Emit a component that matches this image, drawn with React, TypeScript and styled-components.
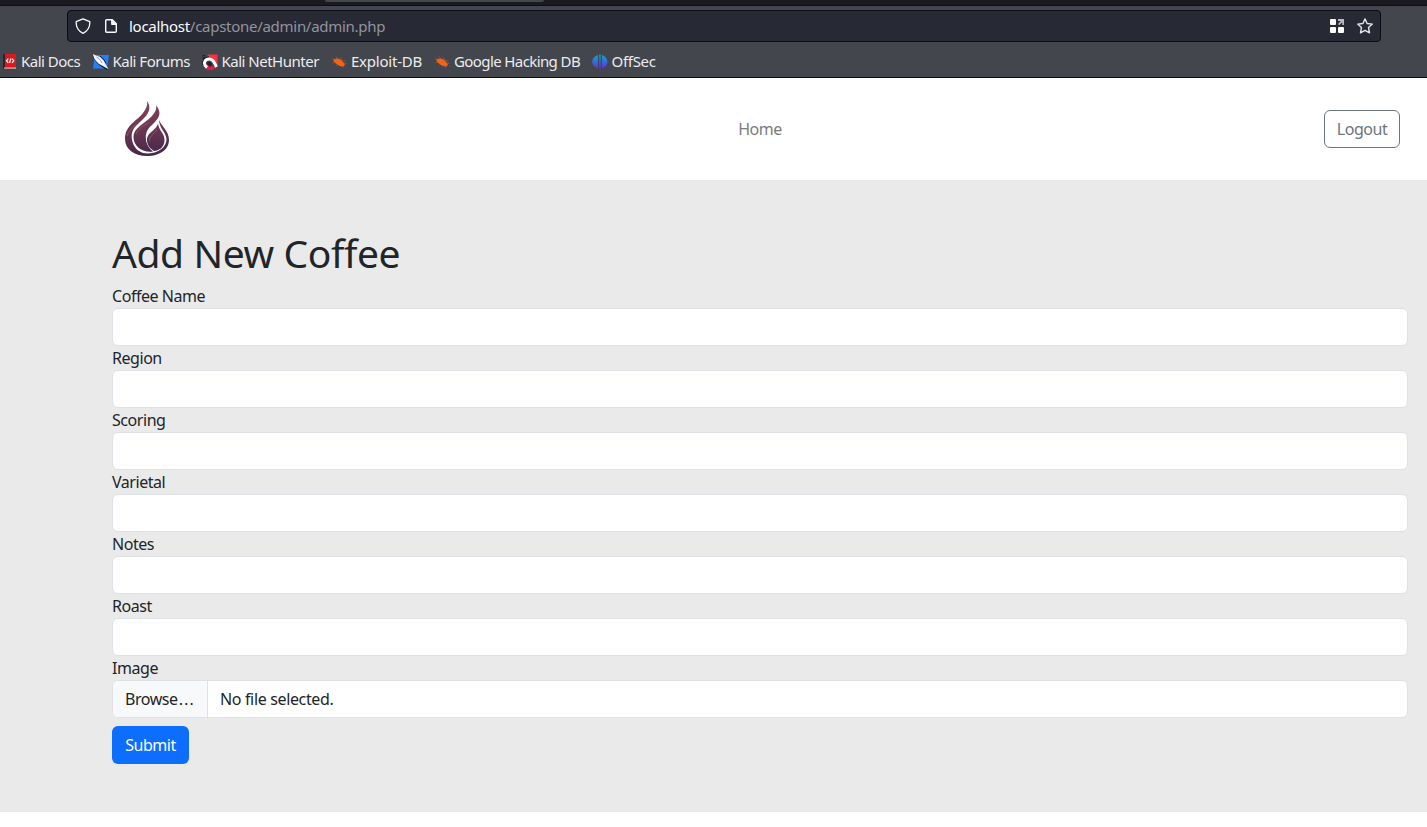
import React from "react";
import styled, { createGlobalStyle } from "styled-components";

const GlobalStyle = createGlobalStyle`
  *, *::before, *::after { box-sizing: border-box; }
  html, body { margin: 0; padding: 0; background: #fff; overflow: hidden; }
  body { font-family: "Noto Sans", sans-serif; font-size: 16px; line-height: 24px; color: #212529; }
  svg { display: block; flex: none; }
`;

const Page = styled.div`
  width: 1427px;
  height: 827px;
  overflow: hidden;
  letter-spacing: -0.45px;
`;

const TabStrip = styled.div`
  height: 6px;
  padding-left: 325px;
  background: #1b1a20;
  border-bottom: 1px solid #0d0d12;
`;

const ActiveTab = styled.div`
  width: 219px;
  height: 2px;
  background: #43464d;
  border-radius: 0 0 4px 4px;
`;

const Toolbar = styled.div`
  height: 72px;
  padding: 4px 46px 0 67px;
  background: #43464d;
  border-bottom: 1px solid #0d0d12;
`;

const AddressBar = styled.div`
  display: flex;
  align-items: center;
  height: 32px;
  padding: 0 7px;
  background: #272935;
  border: 1px solid #0b0c13;
  border-radius: 4px;
`;

const Url = styled.div`
  flex: 1;
  margin-left: 10px;
  font-size: 15px;
  line-height: 20px;
  color: #93949a;
  letter-spacing: -0.28px;
`;

const Host = styled.span`
  color: #fbfbfe;
`;

const PageIcon = styled.span`
  margin-left: 12px;
`;

const StarIcon = styled.span`
  margin-left: 12px;
`;

const Bookmarks = styled.nav`
  display: flex;
  align-items: center;
  height: 36px;
  margin: 2px 0 0 -65px;
`;

const Bookmark = styled.a<{ $width: number; $gap: number; $spacing: number }>`
  display: flex;
  align-items: center;
  gap: ${(p) => p.$gap}px;
  width: ${(p) => p.$width}px;
  font-size: 15px;
  line-height: 20px;
  color: #ececef;
  white-space: nowrap;
  letter-spacing: ${(p) => p.$spacing}px;
`;

const BookmarkLabel = styled.span`
  padding-bottom: 2px;
`;

const Header = styled.header`
  display: grid;
  grid-template-columns: 1fr auto 1fr;
  align-items: center;
  height: 102px;
  padding: 0 27px 0 120px;
  background: #fff;
`;

const HomeLink = styled.a`
  color: #797b7e;
`;

const LogoutButton = styled.button`
  justify-self: end;
  width: 76px;
  height: 38px;
  padding: 0;
  font: inherit;
  letter-spacing: inherit;
  color: #6c757d;
  background: #fff;
  border: 1px solid #6c757d;
  border-radius: 6px;
`;

const FormSection = styled.main`
  height: 632px;
  padding: 48px 19px 48px 112px;
  background: #eaeaea;
`;

const Title = styled.h1`
  height: 48px;
  margin: 0 0 8px;
  font-size: 39px;
  font-weight: 400;
  line-height: 50px;
  letter-spacing: -0.4px;
`;

const Label = styled.label`
  display: block;
  height: 24px;
`;

const Input = styled.input`
  display: block;
  width: 100%;
  height: 38px;
  padding: 6px 12px;
  font: inherit;
  background: #fff;
  border: 1px solid #dee2e6;
  border-radius: 6px;
  outline: none;
`;

const FileInput = styled.div`
  display: flex;
  height: 38px;
  overflow: hidden;
  line-height: 36px;
  background: #fff;
  border: 1px solid #dee2e6;
  border-radius: 6px;
`;

const Browse = styled.span`
  width: 95px;
  padding-left: 12px;
  background: #f8f9fa;
  border-right: 1px solid #dee2e6;
  white-space: nowrap;
`;

const Ellipsis = styled.span`
  font-family: "DejaVu Sans", sans-serif;
  font-size: 16px;
  line-height: 20px;
  margin-left: 0.5px;
`;

const FileName = styled.span`
  padding-left: 12px;
  letter-spacing: -0.35px;
`;

const SubmitButton = styled.button`
  display: block;
  width: 77px;
  height: 38px;
  margin-top: 8px;
  padding: 0;
  font: inherit;
  letter-spacing: inherit;
  color: #fff;
  background: #0d6efd;
  border: 0;
  border-radius: 6px;
`;

const ShieldGlyph = () => (
  <svg width="16" height="16" viewBox="0 0 16 16" fill="none" stroke="#fbfbfe" strokeWidth="1.3" strokeLinejoin="round">
    <path d="M8 .8 14.800 3.600c.3 5.300-1.900 9.400-6.800 11.700C3.100 13 .9 8.900 1.200 3.600Z" />
  </svg>
);

const DocumentGlyph = () => (
  <svg width="16" height="16" viewBox="0 0 16 16" fill="none" stroke="#fbfbfe" strokeWidth="1.4" strokeLinejoin="round">
    <path d="M3.700 1.700H9.300L13.300 5.700V13.300Q13.300 14.300 12.300 14.300H3.700Q2.700 14.300 2.700 13.300V2.700Q2.700 1.700 3.700 1.700Z" />
    <path d="M8.800 2V6.200H13" />
    <path d="M9 2 13 6H9Z" fill="#fbfbfe" stroke="none" />
  </svg>
);

const AppsGlyph = () => (
  <svg width="16" height="16" viewBox="0 0 16 16" fill="#fbfbfe">
    <rect x="1" y="1" width="6" height="6" rx="1" />
    <rect x="1" y="9" width="6" height="6" rx="1" />
    <rect x="9" y="9" width="6" height="6" rx="1" />
    <path d="M9 1H15V7H13.300V4.300L10.200 7.300 9 6.100 11.900 3H9Z" fill="#b9babf" />
  </svg>
);

const StarGlyph = () => (
  <svg width="16" height="16" viewBox="0 0 16 16" fill="none" stroke="#e4e4e8" strokeWidth="1.4" strokeLinejoin="round">
    <path d="M8 .9 10.100 5.500 15.300 6.100 11.500 9.500 12.500 14.900 8 12.300 3.500 14.900 4.500 9.500.7 6.100 5.900 5.500Z" />
  </svg>
);

const DocsGlyph = () => (
  <svg width="16" height="16" viewBox="0 0 16 16">
    <path d="M1 0h3v15H1z" fill="#24253b" />
    <path d="M3 0H14V13.500H3z" fill="#dd171b" />
    <path d="M2 13.500H14V14.800H2z" fill="#d8c6c9" />
    <path d="M2 14.800H13V16H2z" fill="#ad1117" />
    <path d="M6.300 4.700 4.500 6.800 6.300 8.800M10 4.700 11.800 6.700 10 8.800M8.800 4.500 7.500 9" fill="none" stroke="#fff" strokeWidth="1.200" />
  </svg>
);

const ForumsGlyph = () => (
  <svg width="16" height="16" viewBox="0 0 16 16">
    <path d="M2 1H16L14 14.500H0Z" fill="#247fff" />
    <path d="M0 2 4 8 7 11 14 15.500" fill="none" stroke="#171b27" strokeWidth="1.200" />
    <path d="M0 0 3 1.500 7 3 11 7 13 11 15.500 15 10 12 6 10 3 7 1 4Z" fill="#f4f5fa" />
    <path d="M3.500 3 7 5.500 9 9" fill="none" stroke="#8e96a9" strokeWidth=".8" />
    <path d="M7 2 11 5.500 13 9.500" fill="none" stroke="#171b27" strokeWidth=".9" />
  </svg>
);

const HunterGlyph = () => (
  <svg width="16" height="16" viewBox="0 0 16 16">
    <path d="M5 .5H15.500V12Z" fill="#ff3038" />
    <path d="M.5 2 3 1.500M.5 4.500 3 3.500M1 11C.5 6 3 3 7 3" fill="none" stroke="#171821" strokeWidth="1.200" />
    <path d="m2 12 3-2 4 2 5 1L11 16H5Z" fill="#e81946" />
    <path d="M5 13.500C.5 10 2.500 4.800 7.500 5C11.500 5.200 12.500 9 14.500 13" fill="none" stroke="#fff" strokeWidth="3" />
    <path d="M5 10C6 7 9 7 10 11L8 13Z" fill="#22212c" />
  </svg>
);

const BugGlyph = () => (
  <svg width="16" height="16" viewBox="0 0 16 16" fill="#f26415" stroke="#d95e1c">
    <path d="M1.500 5.500C5 3.500 8.500 4.500 11 8L13 10.500 11.500 12.500C7.500 12.500 4 10.500 1.500 7Z" stroke="none" />
    <path d="M0 4.500 4 6M4 2.500 6 5M8.500 3 9.500 6M13.500 7 10 6.500M14.500 9.500 11 9M.5 9 4 8M4 12 6 10M11 14 9 11" strokeWidth=".5" />
  </svg>
);

const OffSecGlyph = () => (
  <svg width="16" height="16" viewBox="0 0 16 16">
    <defs>
      <linearGradient id="offsec" x1="0" y1="0" x2="0" y2="1">
        <stop offset="0" stopColor="#11a6c5" />
        <stop offset=".5" stopColor="#336bdd" />
        <stop offset="1" stopColor="#7420cf" />
      </linearGradient>
    </defs>
    <path d="M6 1V14.500C-1.700 12-1.700 3.500 6 1ZM7.300 .5H8.700V15.500H7.300ZM10 1C17.300 3.500 17.300 12 10 14.500Z" fill="url(#offsec)" />
  </svg>
);

const FlameLogo = () => (
  <svg width="54" height="60" viewBox="0 0 54 60">
    <defs>
      <linearGradient id="flame" gradientUnits="userSpaceOnUse" x1="24" y1="2" x2="32" y2="57">
        <stop offset="0" stopColor="#854457" />
        <stop offset=".55" stopColor="#693452" />
        <stop offset="1" stopColor="#422749" />
      </linearGradient>
    </defs>
    <g fill="url(#flame)">
      <path d="M27 2C34 12 24 19 18 25C12 30 11 35 12 41C14 50 20 54.500 28 54.500C39 54 46.500 48 46.500 40C46 33 39 29 39 21C42 28 49 32 49 41C49 51 39 57 27 57C14 57 5 50 5 40C5 26 17 22 23 14C26 10 28 6 27 2Z" />
      <path d="M36 6C43 15 38 20 32 26C27 30 25 35 26 41C27 47 30 50 33 52.500C22 54 13.500 47 13.500 38C13.500 29 24 25 31 18C35 14 37 10 36 6Z" />
      <path d="M38 24.500C39 32 44.500 34 44.500 41C44.500 48 39 52 34 52C29 49 26.700 45 27 40C27.500 33 36 32 38 24.500Z" />
    </g>
    <path d="M7 37C9 31 13 28 17 25M29 42C30 37 34 34 37 31M16 35C18 30 23 27 28 24" fill="none" stroke="#a5677c" strokeWidth=".9" opacity=".65" />
  </svg>
);

const bookmarks = [
  { label: "Kali Docs", icon: <DocsGlyph />, width: 91, gap: 3, spacing: -0.5 },
  { label: "Kali Forums", icon: <ForumsGlyph />, width: 109, gap: 3.5, spacing: -0.5 },
  { label: "Kali NetHunter", icon: <HunterGlyph />, width: 130, gap: 3.5, spacing: -0.5 },
  { label: "Exploit-DB", icon: <BugGlyph />, width: 103, gap: 3, spacing: -0.22 },
  { label: "Google Hacking DB", icon: <BugGlyph />, width: 157, gap: 3, spacing: -0.6 },
  { label: "OffSec", icon: <OffSecGlyph />, width: 80, gap: 3.5, spacing: -0.3 },
];

const fields = ["Coffee Name", "Region", "Scoring", "Varietal", "Notes", "Roast"];

export default function App() {
  return (
    <Page>
      <GlobalStyle />
      <TabStrip><ActiveTab /></TabStrip>
      <Toolbar>
        <AddressBar>
          <ShieldGlyph />
          <PageIcon><DocumentGlyph /></PageIcon>
          <Url><Host>localhost</Host>/capstone/admin/admin.php</Url>
          <AppsGlyph />
          <StarIcon><StarGlyph /></StarIcon>
        </AddressBar>
        <Bookmarks>
          {bookmarks.map((b) => (
            <Bookmark key={b.label} $width={b.width} $gap={b.gap} $spacing={b.spacing}>
              {b.icon}
              <BookmarkLabel>{b.label}</BookmarkLabel>
            </Bookmark>
          ))}
        </Bookmarks>
      </Toolbar>
      <Header>
        <FlameLogo />
        <HomeLink>Home</HomeLink>
        <LogoutButton>Logout</LogoutButton>
      </Header>
      <FormSection>
        <Title>Add New Coffee</Title>
        {fields.map((name) => (
          <React.Fragment key={name}>
            <Label htmlFor={name}>{name}</Label>
            <Input id={name} />
          </React.Fragment>
        ))}
        <Label>Image</Label>
        <FileInput>
          <Browse>Browse<Ellipsis>…</Ellipsis></Browse>
          <FileName>No file selected.</FileName>
        </FileInput>
        <SubmitButton>Submit</SubmitButton>
      </FormSection>
    </Page>
  );
}
